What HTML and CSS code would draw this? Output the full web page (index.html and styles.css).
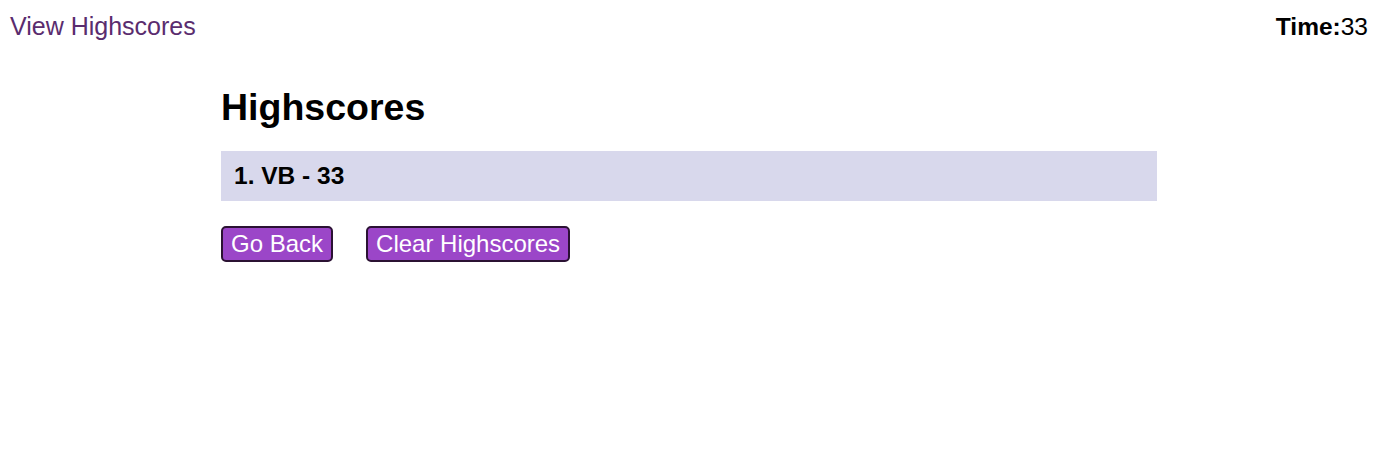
FILE: index.html
```html
<!DOCTYPE html>
<html lang="en">
<head>
<meta charset="utf-8">
<title>Highscores</title>
<link rel="stylesheet" href="styles.css">
</head>
<body>
<header class="top-bar">
  <a class="view-link" href="#">View Highscores</a>
  <div class="timer"><span class="timer-label">Time:</span>33</div>
</header>
<main class="content">
  <h1 class="title">Highscores</h1>
  <ol class="score-list">
    <li class="score-item">1. VB - 33</li>
  </ol>
  <div class="actions">
    <button class="btn" type="button">Go Back</button>
    <button class="btn" type="button">Clear Highscores</button>
  </div>
</main>
</body>
</html>
```

FILE: styles.css
```css
html, body {
  margin: 0;
  padding: 0;
  background: #ffffff;
}

body {
  font-family: "Liberation Sans", Arial, sans-serif;
  color: #000000;
}

.top-bar {
  display: flex;
  justify-content: space-between;
  align-items: flex-start;
  padding: 12px 10px 0 10px;
  font-size: 25px;
  line-height: normal;
}

.view-link {
  color: #5a2c6e;
  text-decoration: none;
}

.timer {
  font-size: 24.5px;
  padding-top: 1px;
}

.timer-label {
  font-weight: bold;
}

.content {
  width: 936px;
  margin: 0 auto;
}

.title {
  font-size: 37.5px;
  font-weight: bold;
  margin: 45px 0 22px 0;
  line-height: normal;
}

.score-list {
  list-style: none;
  margin: 0;
  padding: 0;
}

.score-item {
  background: #d8d8ec;
  font-size: 24.5px;
  font-weight: bold;
  padding: 11px 13px;
  line-height: normal;
}

.actions {
  display: flex;
  gap: 33px;
  margin-top: 25px;
}

.btn {
  font-family: "Liberation Sans", Arial, sans-serif;
  font-size: 24px;
  line-height: normal;
  color: #ffffff;
  background: #9b46c8;
  border: 2px solid #2b1233;
  border-radius: 5px;
  padding: 2px 8px;
  cursor: pointer;
}
```
